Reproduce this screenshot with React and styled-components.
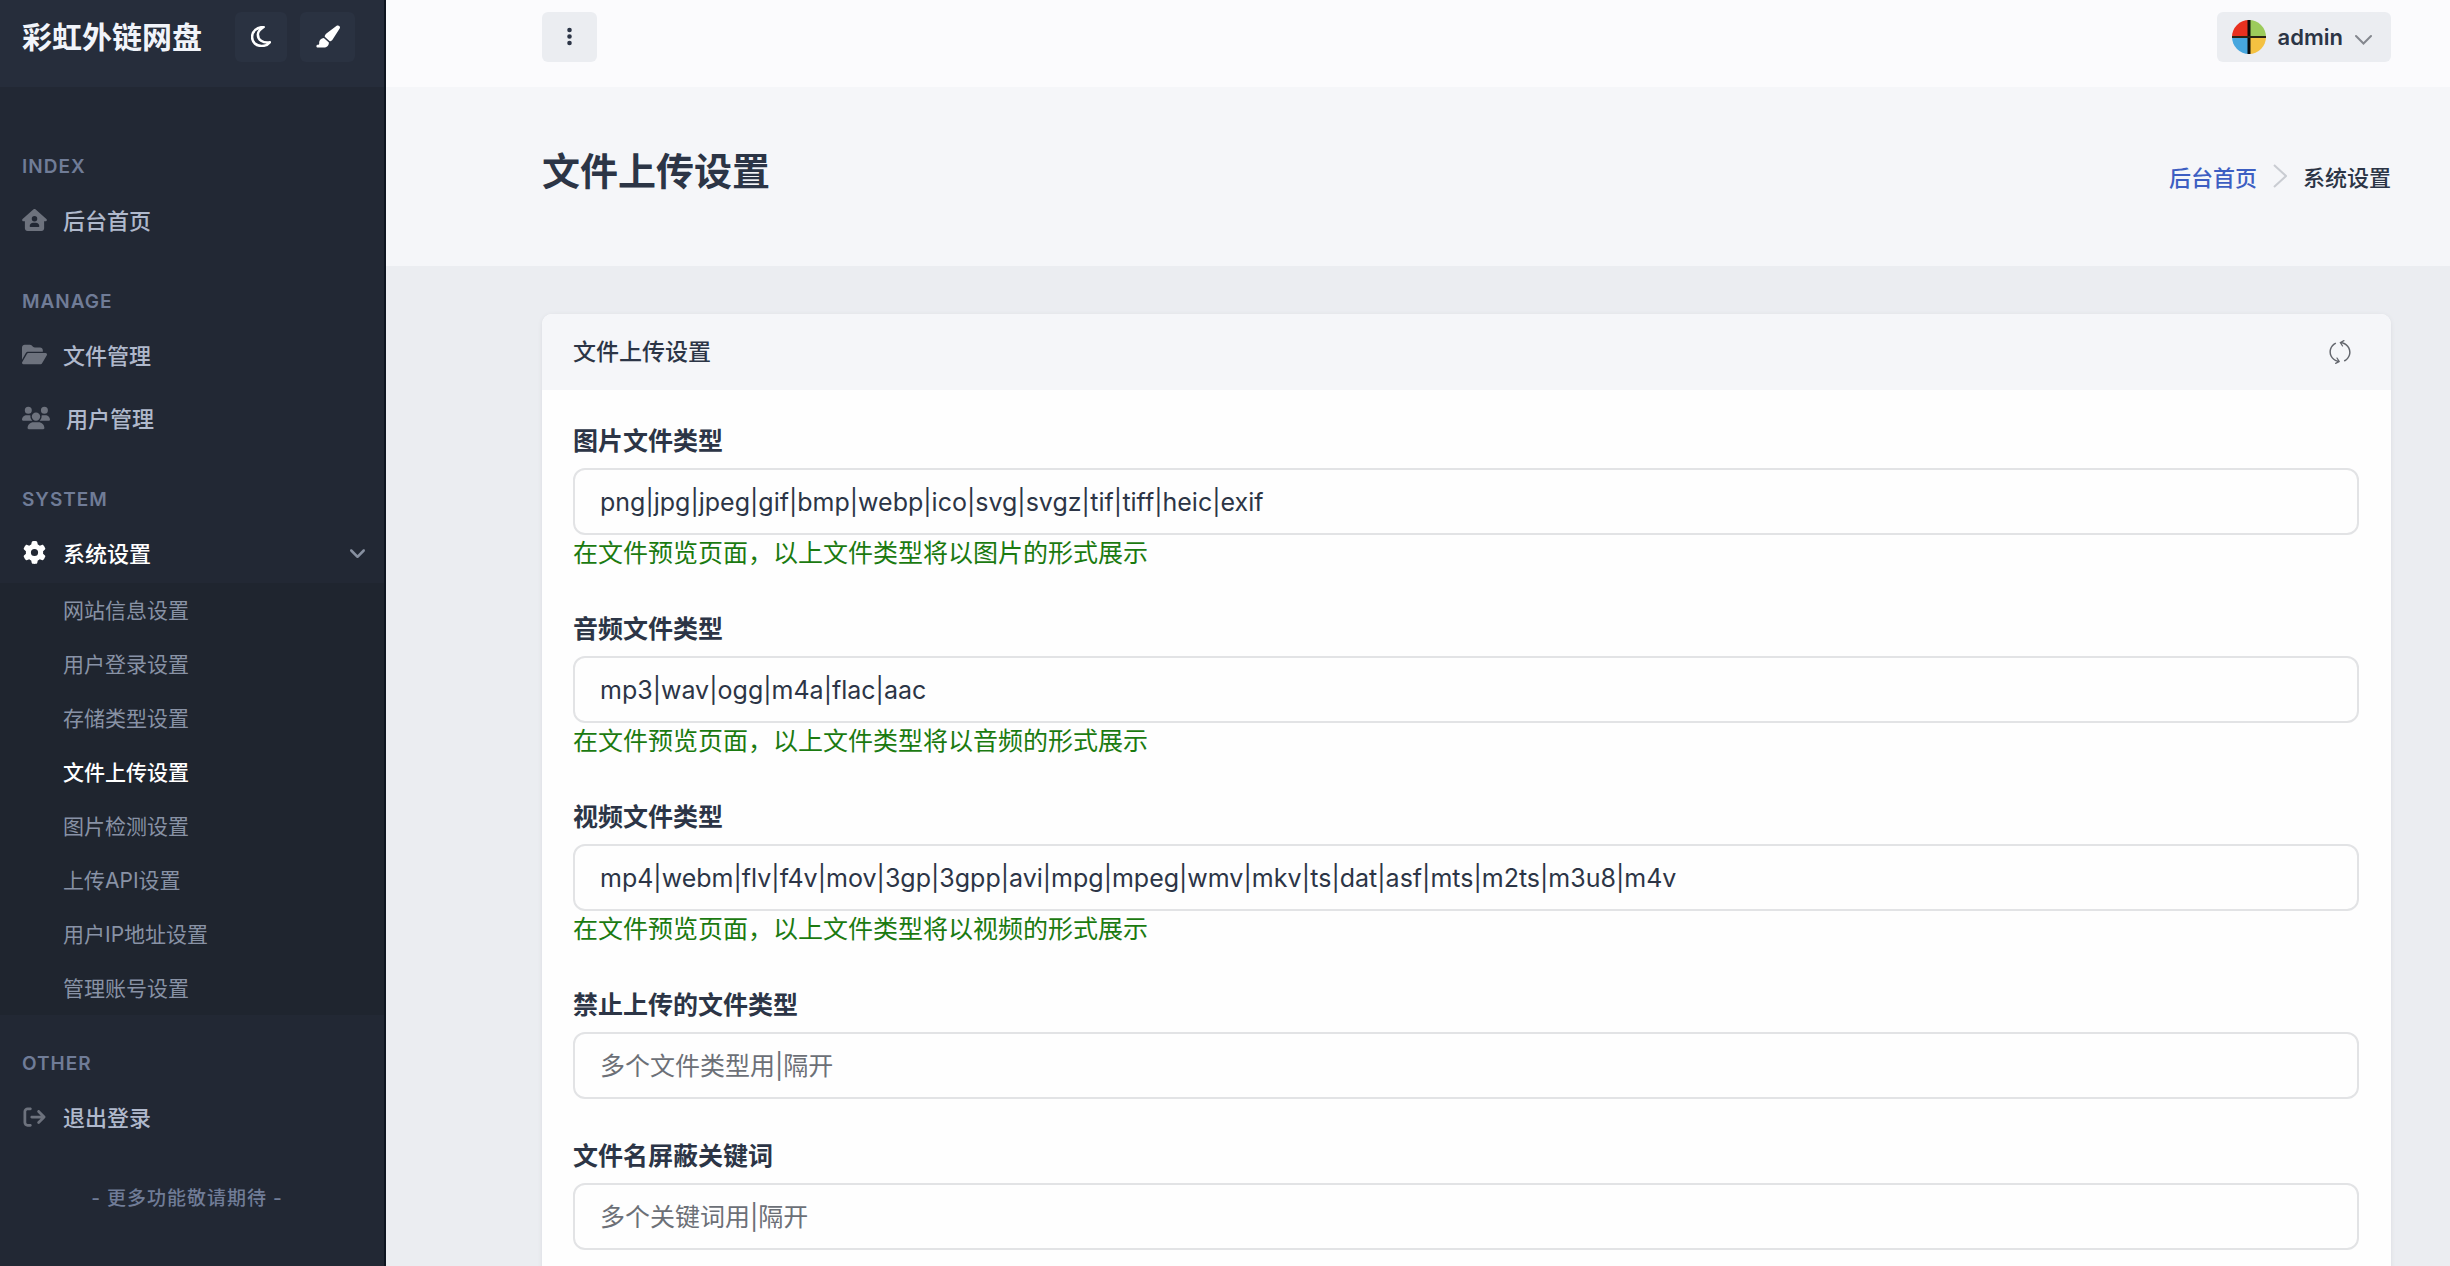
import styled, { createGlobalStyle } from "styled-components";
import { FaPaintbrush, FaHouseUser, FaFolderOpen, FaUsers, FaGear, FaArrowRightFromBracket, FaEllipsisVertical, FaAngleDown } from "react-icons/fa6";
import { SlRefresh } from "react-icons/sl";

const colores = {
    lateral: "#222834",
    lateralCabecera: "#262d3b",
    submenu: "#1f252f",
    boton: "#2a3241",
    seccion: "#707c97",
    enlace: "#b0b9cc",
    subEnlace: "#8892a5",
    icono: "#6d727d",
    texto: "#2c3546",
    fondo: "#ebedf1",
    claro: "#f5f6f9",
    borde: "#e2e3e5",
    azul: "#3d5ec2",
    verde: "#1b7a10",
};

const GlobalStyle = createGlobalStyle`
    * {
        box-sizing: border-box;
        margin: 0;
        padding: 0;
    }

    body {
        background: ${colores.fondo};
        color: ${colores.texto};
        font-family: Inter, "Noto Sans CJK SC", sans-serif;
        font-size: 22px;
        overflow: hidden;
    }

    button, input {
        font-family: inherit;
        color: inherit;
    }

    a {
        text-decoration: none;
    }
`

const Pagina = styled.div`
    display: flex;
    height: 100vh;
    overflow: hidden;
`

const Lateral = styled.aside`
    flex: 0 0 386px;
    background: ${colores.lateral};
    border-right: 2px solid #0e1520;
`

const CabeceraLateral = styled.div`
    display: flex;
    align-items: center;
    height: 87px;
    padding: 0 29px 14px 22px;
    background: ${colores.lateralCabecera};
`

const Marca = styled.a`
    flex: 1;
    font-size: 30px;
    line-height: 44px;
    font-weight: 700;
    color: #f1f4fa;
`

const BotonOscuro = styled.button`
    display: flex;
    align-items: center;
    justify-content: center;
    width: ${({ $ancho }) => $ancho}px;
    height: 50px;
    margin-left: 13px;
    border: none;
    border-radius: 6px;
    background: ${colores.boton};
    color: #fff;
    font-size: 25px;
`

const Menu = styled.nav`
    padding-top: 49px;
`

const Seccion = styled.h3`
    padding: 18px 22px 0;
    margin-bottom: 7px;
    font-size: 19px;
    line-height: 26px;
    font-weight: 600;
    letter-spacing: 1px;
    color: ${colores.seccion};
`

const Grupo = styled.ul`
    list-style: none;
    margin-bottom: 21px;
`

const Enlace = styled.a`
    display: flex;
    align-items: center;
    gap: 16px;
    height: 63px;
    padding: 0 22px;
    font-size: 22px;
    font-weight: 500;
    color: ${({ $activo }) => ($activo ? "#fff" : colores.enlace)};

    > svg {
        flex: none;
        min-width: 25px;
        margin-top: 2px;
        color: ${({ $activo }) => ($activo ? "#fff" : colores.icono)};
    }

    > svg:nth-of-type(2) {
        margin-left: auto;
        margin-right: -8px;
        color: #8790a0;
    }
`

const Submenu = styled.ul`
    list-style: none;
    padding-left: 63px;
    margin-bottom: 18px;
    background: ${colores.submenu};
`

const SubEnlace = styled.a`
    display: flex;
    align-items: center;
    height: 54px;
    padding-bottom: 2px;
    font-size: 21px;
    font-weight: ${({ $activo }) => ($activo ? 500 : 400)};
    color: ${({ $activo }) => ($activo ? "#fff" : colores.subEnlace)};
`

const Nota = styled.p`
    padding: 17px 10px 0 0;
    text-align: center;
    font-size: 19px;
    line-height: 28px;
    font-weight: 500;
    letter-spacing: 1px;
    color: ${colores.seccion};
`

const Contenido = styled.main`
    flex: 1;
    min-width: 0;
`

const BarraSuperior = styled.header`
    display: flex;
    align-items: center;
    justify-content: space-between;
    height: 87px;
    padding: 0 59px 14px 156px;
    background: #fbfbfd;
`

const BotonClaro = styled.button`
    display: flex;
    align-items: center;
    justify-content: center;
    height: 50px;
    padding: ${({ $relleno }) => $relleno};
    border: none;
    border-radius: 6px;
    background: ${colores.fondo};
    font-size: 22px;
    font-weight: 600;
`

const NombreUsuario = styled.span`
    margin: 0 12px;
`

const Portada = styled.section`
    display: flex;
    align-items: center;
    justify-content: space-between;
    height: 179px;
    padding: 0 59px 12px 156px;
    background: ${colores.claro};
`

const Titulo = styled.h1`
    font-size: 38px;
    line-height: 56px;
    font-weight: 700;
`

const Migas = styled.nav`
    display: flex;
    align-items: center;
    gap: 16px;
    padding-top: 10px;
    font-weight: 500;

    a {
        color: ${colores.azul};
    }
`

const Tarjeta = styled.section`
    margin: 48px 59px 0 156px;
    border-radius: 10px;
    background: #fefefe;
    box-shadow: 0 1px 4px #d9dbe0;
`

const CabeceraTarjeta = styled.div`
    display: flex;
    align-items: center;
    justify-content: space-between;
    height: 76px;
    padding: 0 39px 0 31px;
    border-radius: 10px 10px 0 0;
    background: ${colores.claro};

    h2 {
        font-size: 23px;
        line-height: 34px;
        font-weight: 500;
    }

    button {
        display: flex;
        border: none;
        background: none;
        color: #63666d;
        font-size: 24px;
    }
`

const Formulario = styled.form`
    padding: 32px 32px 60px 31px;
`

const Campo = styled.div`
    display: flex;
    flex-direction: column;
    margin-bottom: 38px;
`

const Etiqueta = styled.label`
    margin-bottom: 8px;
    font-size: 25px;
    line-height: 38px;
    font-weight: 600;
`

const Entrada = styled.input`
    width: 100%;
    height: 67px;
    padding: 0 25px;
    border: 2px solid ${colores.borde};
    border-radius: 12px;
    outline: none;
    background: #fefefe;
    font-size: 25px;

    &::placeholder {
        color: #6c7077;
    }
`

const Ayuda = styled.span`
    font-size: 25px;
    line-height: 37px;
    color: ${colores.verde};
`

const Luna = () => (
    <svg width="20" height="21" viewBox="0 0 19 20" fill="none" stroke="currentColor" strokeWidth="2.400" strokeLinejoin="round" aria-hidden="true">
        <path d="M12 1C5.500 1 1 5 1 10.500C1 15.500 5 19 10 19C13.500 19 16.500 17.500 18 15.500C11 16.500 6.500 13 6.500 8C6.500 5 9 3 12 1Z" />
    </svg>
)

const Avatar = () => (
    <svg width="34" height="34" viewBox="0 0 34 34" aria-hidden="true">
        <path d="M17 17V0A17 17 0 0 0 0 17Z" fill="#e8301f" />
        <path d="M17 17V0A17 17 0 0 1 34 17Z" fill="#9ccb5b" />
        <path d="M17 17H0A17 17 0 0 0 17 34Z" fill="#46a6de" />
        <path d="M17 17H34A17 17 0 0 1 17 34Z" fill="#f4c141" />
        <path d="M17 0V34" stroke="#0b0b0b" strokeWidth="3" />
        <path d="M0 17H34" stroke="#2b2314" strokeWidth="2" />
    </svg>
)

const Separador = () => (
    <svg width="14" height="24" viewBox="0 0 14 24" fill="none" stroke="#c9ccd2" strokeWidth="2" aria-hidden="true">
        <path d="M1 1L13 12L1 23" />
    </svg>
)

const FlechaAbajo = () => (
    <svg width="17" height="16" viewBox="0 0 17 16" fill="none" stroke="#84878e" strokeWidth="2" strokeLinecap="round" aria-hidden="true">
        <path d="M1 7L8.500 14.500L16 7" />
    </svg>
)

const submenu = [
    "网站信息设置",
    "用户登录设置",
    "存储类型设置",
    "文件上传设置",
    "图片检测设置",
    "上传API设置",
    "用户IP地址设置",
    "管理账号设置",
];

const campos = [
    {
        id: "imagen",
        etiqueta: "图片文件类型",
        valor: "png|jpg|jpeg|gif|bmp|webp|ico|svg|svgz|tif|tiff|heic|exif",
        ayuda: "在文件预览页面，以上文件类型将以图片的形式展示",
    },
    {
        id: "audio",
        etiqueta: "音频文件类型",
        valor: "mp3|wav|ogg|m4a|flac|aac",
        ayuda: "在文件预览页面，以上文件类型将以音频的形式展示",
    },
    {
        id: "video",
        etiqueta: "视频文件类型",
        valor: "mp4|webm|flv|f4v|mov|3gp|3gpp|avi|mpg|mpeg|wmv|mkv|ts|dat|asf|mts|m2ts|m3u8|m4v",
        ayuda: "在文件预览页面，以上文件类型将以视频的形式展示",
    },
    { id: "bloqueados", etiqueta: "禁止上传的文件类型", indicacion: "多个文件类型用|隔开" },
    { id: "palabras", etiqueta: "文件名屏蔽关键词", indicacion: "多个关键词用|隔开" },
];

const App = () => {
    return (
        <>
            <GlobalStyle />
            <Pagina>
                <Lateral>
                    <CabeceraLateral>
                        <Marca href="#">彩虹外链网盘</Marca>
                        <BotonOscuro $ancho={52} aria-label="moon"><Luna /></BotonOscuro>
                        <BotonOscuro $ancho={55} aria-label="brush"><FaPaintbrush /></BotonOscuro>
                    </CabeceraLateral>
                    <Menu>
                        <Seccion>INDEX</Seccion>
                        <Grupo>
                            <li><Enlace href="#"><FaHouseUser size={22} />后台首页</Enlace></li>
                        </Grupo>
                        <Seccion>MANAGE</Seccion>
                        <Grupo>
                            <li><Enlace href="#"><FaFolderOpen size={23} />文件管理</Enlace></li>
                            <li><Enlace href="#"><FaUsers size={28} />用户管理</Enlace></li>
                        </Grupo>
                        <Seccion>SYSTEM</Seccion>
                        <ul>
                            <li>
                                <Enlace href="#" $activo><FaGear size={23} />系统设置<FaAngleDown size={20} /></Enlace>
                                <Submenu>
                                    {submenu.map((texto) => (
                                        <li key={texto}>
                                            <SubEnlace href="#" $activo={texto === "文件上传设置"}>{texto}</SubEnlace>
                                        </li>
                                    ))}
                                </Submenu>
                            </li>
                        </ul>
                        <Seccion>OTHER</Seccion>
                        <Grupo>
                            <li><Enlace href="#"><FaArrowRightFromBracket size={22} />退出登录</Enlace></li>
                        </Grupo>
                        <Nota>- 更多功能敬请期待 -</Nota>
                    </Menu>
                </Lateral>
                <Contenido>
                    <BarraSuperior>
                        <BotonClaro $relleno="0 17px" aria-label="menu"><FaEllipsisVertical size={21} /></BotonClaro>
                        <BotonClaro $relleno="0 19px 0 15px">
                            <Avatar />
                            <NombreUsuario>admin</NombreUsuario>
                            <FlechaAbajo />
                        </BotonClaro>
                    </BarraSuperior>
                    <Portada>
                        <Titulo>文件上传设置</Titulo>
                        <Migas>
                            <a href="#">后台首页</a>
                            <Separador />
                            <span>系统设置</span>
                        </Migas>
                    </Portada>
                    <Tarjeta>
                        <CabeceraTarjeta>
                            <h2>文件上传设置</h2>
                            <button aria-label="refresh"><SlRefresh /></button>
                        </CabeceraTarjeta>
                        <Formulario>
                            {campos.map(({ id, etiqueta, valor, indicacion, ayuda }) => (
                                <Campo key={id}>
                                    <Etiqueta htmlFor={id}>{etiqueta}</Etiqueta>
                                    <Entrada id={id} type="text" defaultValue={valor} placeholder={indicacion} />
                                    {ayuda && <Ayuda>{ayuda}</Ayuda>}
                                </Campo>
                            ))}
                        </Formulario>
                    </Tarjeta>
                </Contenido>
            </Pagina>
        </>
    )
}

export default App
